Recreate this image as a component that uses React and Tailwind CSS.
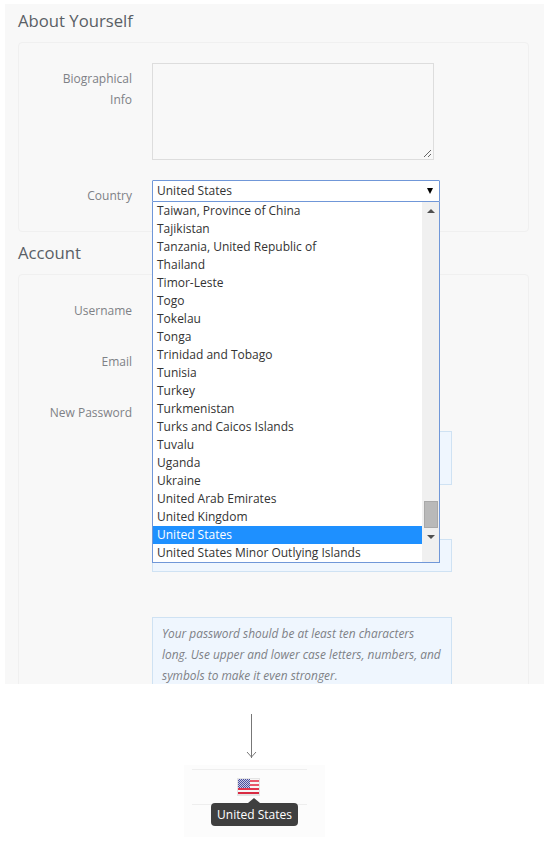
import React from "react";

const countries = [
  "Taiwan, Province of China",
  "Tajikistan",
  "Tanzania, United Republic of",
  "Thailand",
  "Timor-Leste",
  "Togo",
  "Tokelau",
  "Tonga",
  "Trinidad and Tobago",
  "Tunisia",
  "Turkey",
  "Turkmenistan",
  "Turks and Caicos Islands",
  "Tuvalu",
  "Uganda",
  "Ukraine",
  "United Arab Emirates",
  "United Kingdom",
  "United States",
  "United States Minor Outlying Islands",
];

function Flag() {
  return (
    <svg width="23" height="18" viewBox="0 0 23 18" className="block">
      <defs>
        <pattern id="stars" width="2" height="2" patternUnits="userSpaceOnUse">
          <rect width="2" height="2" fill="#4a4f9c" />
          <rect width="1" height="1" fill="#c9cbe6" />
          <rect x="1" y="1" width="1" height="1" fill="#c9cbe6" />
        </pattern>
      </defs>
      <rect width="23" height="18" fill="#e4e4e4" />
      <rect x="1" y="1" width="21" height="15" fill="#f6f6f6" />
      <rect x="1" y="2" width="21" height="2" fill="#e8566a" />
      <rect x="1" y="6" width="21" height="2" fill="#e8566a" />
      <rect x="1" y="10" width="21" height="2" fill="#e0344c" />
      <rect x="1" y="14" width="21" height="2" fill="#d92a42" />
      <rect x="1" y="1" width="12" height="9" fill="url(#stars)" />
    </svg>
  );
}

export default function App() {
  return (
    <div className="w-[549px] h-[849px] bg-white font-['Open_Sans',sans-serif] overflow-hidden">
      <div className="pt-1 pl-[5px]">
        <div className="relative w-[539px] h-[680px] bg-[#f8f8f8] pl-[13px] pr-[15px] overflow-hidden">
          <h2 className="text-[16.7px] leading-[34px] text-[#5a5f66]">About Yourself</h2>
          <div className="h-[190px] mt-[4px] border border-[#f0f0f0] rounded-sm flex">
            <div className="w-[113px] pt-[25px] text-right text-[12px] leading-[21px] text-[#7e8186]">
              <div>Biographical</div>
              <div>Info</div>
              <div className="mt-[75px]">Country</div>
            </div>
            <div className="ml-[20px] pt-[20px]">
              <div className="relative w-[282px] h-[97px] border border-[#dddddd]">
                <svg width="9" height="9" viewBox="0 0 9 9" className="absolute right-px bottom-px">
                  <path d="M1 8 8 1M5 8 8 5" stroke="#666" strokeWidth="1" fill="none" />
                </svg>
              </div>
            </div>
          </div>

          <h2 className="text-[16.7px] leading-[34px] mt-[4px] text-[#5a5f66]">Account</h2>
          <div className="h-[420px] mt-[4px] border border-[#f0f0f0] rounded-sm flex">
            <div className="w-[113px] pt-[25px] text-right text-[12px] leading-[21px] text-[#7e8186]">
              <div>Username</div>
              <div className="mt-[30px]">Email</div>
              <div className="mt-[30px]">New Password</div>
            </div>
            <div className="ml-[20px] pt-[156px]">
              <div className="w-[300px] h-[54px] border border-[#cfe2f3] bg-[#eff6fe]" />
              <div className="w-[300px] h-[33px] mt-[54px] border border-[#cfe2f3] bg-[#eff6fe]" />
              <div className="w-[300px] h-[90px] mt-[45px] border border-[#cfe2f3] bg-[#eff6fe] px-[9px] pt-[5px] text-[11.9px] leading-[21px] italic text-[#7e8186]">
                Your password should be at least ten characters long. Use upper and lower case letters, numbers, and symbols to make it even stronger.
              </div>
            </div>
          </div>

          {/* open select */}
          <div className="absolute left-[147px] top-[176px] w-[288px] text-[12px] text-[#333]">
            <div className="h-[22px] bg-white border border-[#7097d8] rounded-t-[1px] pl-[4px] flex items-center justify-between pr-[6px]">
              <span>United States</span>
              <span className="w-0 h-0 border-x-[3.5px] border-x-transparent border-t-[6px] border-t-black" />
            </div>
            <div className="h-[361px] bg-white border border-t-0 border-[#7097d8] flex">
              <div className="flex-1">
                {countries.map((c) => (
                  <div
                    key={c}
                    className={
                      c === "United States"
                        ? "h-[18px] leading-[18px] pl-[4px] bg-[#1e90ff] text-white"
                        : "h-[18px] leading-[18px] pl-[4px] whitespace-nowrap"
                    }
                  >
                    {c}
                  </div>
                ))}
              </div>
              <div className="w-[17px] bg-[#f0f0f0] flex flex-col items-center">
                <span className="mt-[7px] w-0 h-0 border-x-[4px] border-x-transparent border-b-[4px] border-b-[#505050]" />
                <span className="mt-[288px] w-[14px] h-[27px] bg-[#b9b9b9] border border-[#a8a8a8]" />
                <span className="mt-[7px] w-0 h-0 border-x-[4px] border-x-transparent border-t-[4px] border-t-[#505050]" />
              </div>
            </div>
          </div>
        </div>
      </div>

      <div className="ml-[251px] mt-[30px] relative w-px h-[44px] bg-[#777]">
        <svg width="11" height="7" viewBox="0 0 11 7" className="absolute -left-[5px] bottom-0">
          <path d="M1 1 5.5 6 10 1" stroke="#777" fill="none" />
        </svg>
      </div>

      <div className="relative ml-[184px] mt-[7px] w-[141px] h-[72px] bg-[#fcfcfc]">
        <div className="absolute left-[8px] right-[18px] top-[4px] h-px bg-[#eeeeee]" />
        <div className="absolute left-[8px] right-[18px] top-[39px] h-px bg-[#eeeeee]" />
        <div className="absolute left-[53px] top-[13px]">
          <Flag />
        </div>
        <div className="absolute left-[27px] top-[38px] w-[87px] h-[23px] rounded-sm bg-[#3f3f3f] text-white text-[12px] leading-[23px] text-center">
          United States
          <span className="absolute left-[37px] -top-[5px] w-0 h-0 border-x-[6px] border-x-transparent border-b-[5px] border-b-[#3f3f3f]" />
        </div>
      </div>
    </div>
  );
}
